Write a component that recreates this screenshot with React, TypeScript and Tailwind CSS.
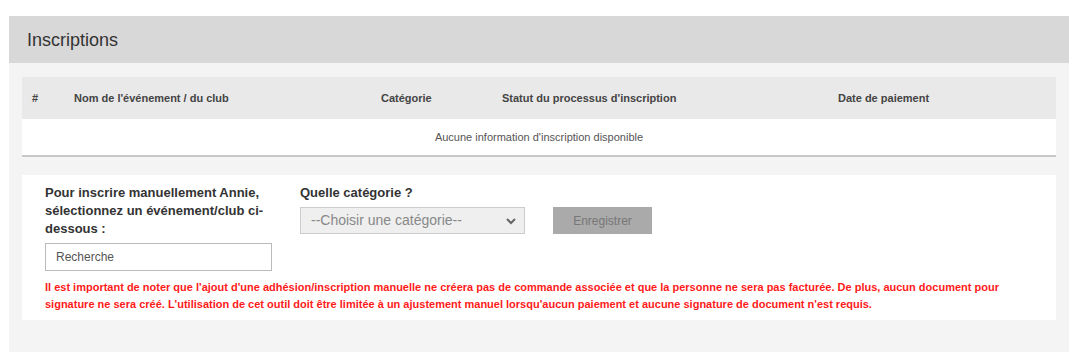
import React from "react";

export default function App() {
  const font = { fontFamily: '"Liberation Sans", Arial, Helvetica, sans-serif' };
  return (
    <div className="w-[1080px] h-[359px] bg-white pt-[16px] pl-[9px]" style={font}>
      <div className="w-[1060px] h-[336px] bg-[#f4f4f4]">
        <div className="h-[47px] bg-[#d8d8d8] flex items-center pl-[18px] pt-[2px]">
          <h2 className="text-[18px] text-[#333] font-normal">Inscriptions</h2>
        </div>
        <div className="px-[13px] pt-[14px]">
          <div className="w-[1034px]">
            <div className="grid grid-cols-[42px_307px_121px_336px_228px] h-[42px] items-center bg-[#e9e9e9] text-[11px] font-bold text-[#444]">
              <div className="pl-[10px]">#</div>
              <div className="pl-[10px]">Nom de l'événement / du club</div>
              <div className="pl-[10px]">Catégorie</div>
              <div className="pl-[10px]">Statut du processus d'inscription</div>
              <div className="pl-[10px]">Date de paiement</div>
            </div>
            <div className="h-[38px] bg-white border-b-2 border-[#c8c8c8] flex items-center justify-center text-[11px] text-[#555]">
              Aucune information d'inscription disponible
            </div>
          </div>
          <div className="mt-[18px] w-[1034px] h-[145px] bg-white pl-[23px] pt-[9px]">
            <div className="flex gap-[28px]">
              <div className="w-[227px]">
                <div className="text-[13px] font-bold text-[#333] leading-[18px]">
                  Pour inscrire manuellement Annie, sélectionnez un événement/club ci-dessous :
                </div>
                <div className="mt-[5px] h-[28px] border border-[#bbb] flex items-center pl-[10px] text-[12px] text-[#555] bg-white">
                  Recherche
                </div>
              </div>
              <div className="w-[225px]">
                <div className="text-[13px] font-bold text-[#333] leading-[18px]">Quelle catégorie ?</div>
                <div className="mt-[5px] h-[27px] bg-[#efefef] border border-[#ccc] flex items-center justify-between pl-[10px] pr-[7px] text-[14px] text-[#888]">
                  <span>--Choisir une catégorie--</span>
                  <svg width="12" height="8" viewBox="0 0 12 8">
                    <path d="M2 2 L6 6 L10 2" stroke="#666" strokeWidth="2" fill="none" />
                  </svg>
                </div>
              </div>
              <div className="pt-[23px]">
                <div className="w-[99px] h-[27px] bg-[#aaaaaa] flex items-center justify-center text-[12px] text-[#777]">
                  Enregistrer
                </div>
              </div>
            </div>
            <p className="mt-[8px] w-[962px] text-[11px] font-bold text-[#ff1a1a] leading-[17px]">
              Il est important de noter que l'ajout d'une adhésion/inscription manuelle ne créera pas de commande associée et que la personne ne sera pas facturée. De plus, aucun document pour signature ne sera créé. L'utilisation de cet outil doit être limitée à un ajustement manuel lorsqu'aucun paiement et aucune signature de document n'est requis.
            </p>
          </div>
        </div>
      </div>
    </div>
  );
}
